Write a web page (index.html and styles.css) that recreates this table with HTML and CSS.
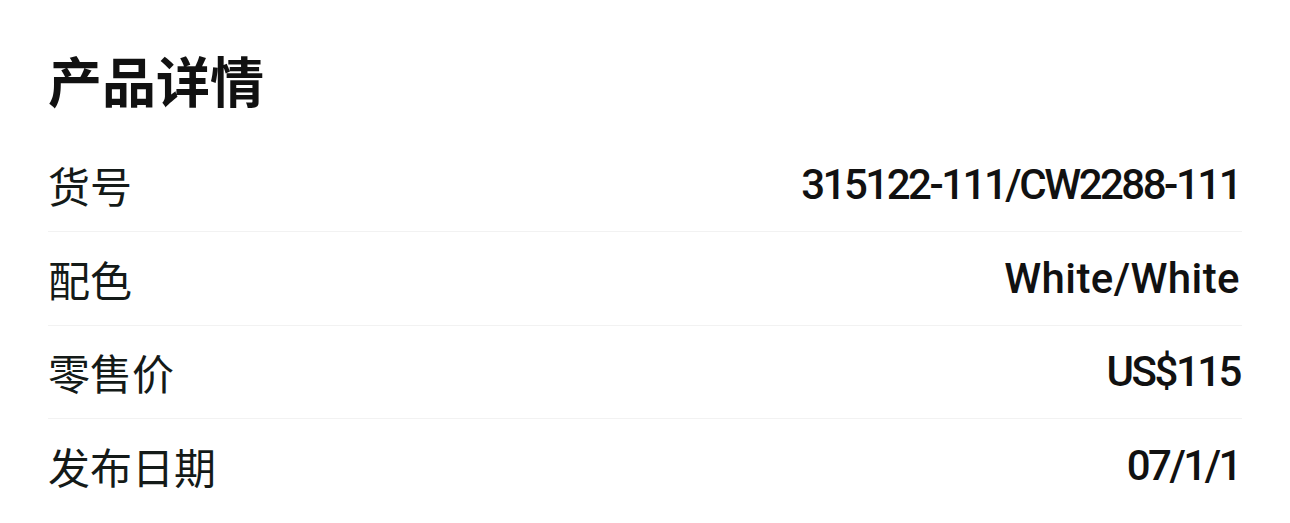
FILE: index.html
```html
<!DOCTYPE html>
<html lang="zh-CN">
<head>
<meta charset="utf-8">
<title>产品详情</title>
<link rel="stylesheet" href="styles.css">
</head>
<body>

<div class="details">
<h2 class="title">产品详情</h2>

<div class="row">
  <span class="label">货号</span>
  <span class="value num">315122-111/CW2288-111</span>
</div>
<div class="row">
  <span class="label">配色</span>
  <span class="value">White/White</span>
</div>
<div class="row">
  <span class="label">零售价</span>
  <span class="value num">US$115</span>
</div>
<div class="row last">
  <span class="label">发布日期</span>
  <span class="value num">07/1/1</span>
</div>
</div>

</body>
</html>
```

FILE: styles.css
```css
body {
  margin: 0;
  background: #ffffff;
  font-family: "Noto Sans CJK SC", sans-serif;
  color: #111111;
}
.details {
  padding: 48px 48px 0 48px;
}
.title {
  margin: 0 0 26.5px 0;
  font-size: 54px;
  line-height: 64px;
  font-weight: 700;
}
.row {
  display: flex;
  justify-content: space-between;
  align-items: center;
  height: 93.5px;
  box-sizing: border-box;
  border-bottom: 1px solid #f2f2f2;
}
.row.last { border-bottom: none; }
.label {
  font-size: 42px;
  color: #141a18;
}
.value {
  font-family: Roboto, "Liberation Sans", sans-serif;
  font-weight: 500;
  font-size: 42px;
  letter-spacing: 0.4px;
  margin-right: 2px;
}
.value.num { letter-spacing: -2.5px; }
```
